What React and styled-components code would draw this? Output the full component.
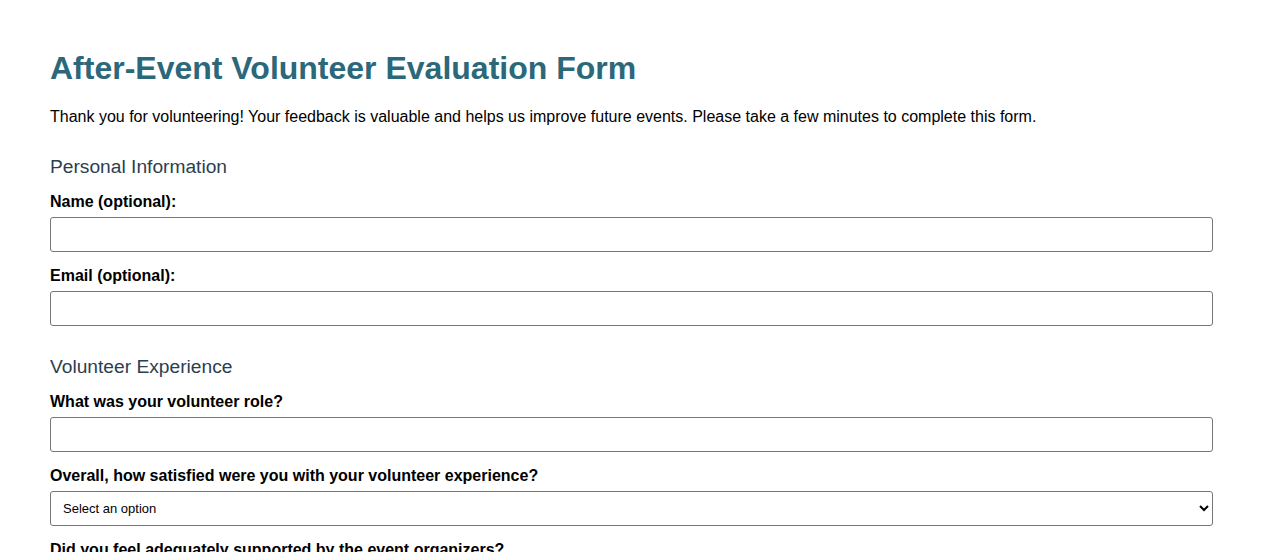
import React from 'react'
import styled, { createGlobalStyle } from 'styled-components'

const GlobalStyle = createGlobalStyle`
    body {
        margin: 0;
        background: #fff;
        font-family: "Liberation Sans", Arial, sans-serif;
        color: #000;
    }
`;

const Page = styled.div`
    padding: 50px 50px 40px;
`;

const Title = styled.h1`
    margin: 0;
    font-size: 32px;
    line-height: 37px;
    font-weight: bold;
    color: #2b687a;
`;

const Intro = styled.p`
    margin: 21px 0 0;
    font-size: 16px;
    line-height: 18px;
`;

const SectionTitle = styled.h2`
    margin: 29px 0 15px;
    font-size: 19.2px;
    line-height: 23px;
    font-weight: normal;
    color: #2c3e50;
`;

const Group = styled.div`
    margin-bottom: 15px;
`;

const Label = styled.label`
    display: block;
    font-size: 16px;
    line-height: 18px;
    font-weight: bold;
    margin-bottom: 6px;
`;

const Input = styled.input`
    display: block;
    box-sizing: border-box;
    width: 100%;
    height: 35px;
    padding: 8px 12px;
    border: 1px solid #767676;
    border-radius: 3px;
    font-family: inherit;
    font-size: 13px;
    background: #fff;
`;

const Select = styled.select`
    display: block;
    box-sizing: border-box;
    width: 100%;
    height: 35px;
    padding: 0 8px;
    border: 1px solid #767676;
    border-radius: 3px;
    font-family: "Liberation Sans", Arial, sans-serif;
    font-size: 13px;
    color: #000;
    background: #fff;
`;

const Field = ({ label, children }) => (
    <Group>
        <Label>{label}</Label>
        {children}
    </Group>
)

const App = () => {
    return (
        <Page>
            <GlobalStyle />
            <Title>After-Event Volunteer Evaluation Form</Title>
            <Intro>
                Thank you for volunteering! Your feedback is valuable and helps us improve future events. Please take a few minutes to complete this form.
            </Intro>

            <SectionTitle>Personal Information</SectionTitle>
            <Field label="Name (optional):">
                <Input type="text" />
            </Field>
            <Field label="Email (optional):">
                <Input type="email" />
            </Field>

            <SectionTitle>Volunteer Experience</SectionTitle>
            <Field label="What was your volunteer role?">
                <Input type="text" />
            </Field>
            <Field label="Overall, how satisfied were you with your volunteer experience?">
                <Select defaultValue="">
                    <option value="">Select an option</option>
                    <option>Very satisfied</option>
                    <option>Satisfied</option>
                    <option>Neutral</option>
                    <option>Dissatisfied</option>
                    <option>Very dissatisfied</option>
                </Select>
            </Field>
            <Field label="Did you feel adequately supported by the event organizers?">
                <Select defaultValue="">
                    <option value="">Select an option</option>
                    <option>Yes</option>
                    <option>Somewhat</option>
                    <option>No</option>
                </Select>
            </Field>
        </Page>
    )
}

export default App
